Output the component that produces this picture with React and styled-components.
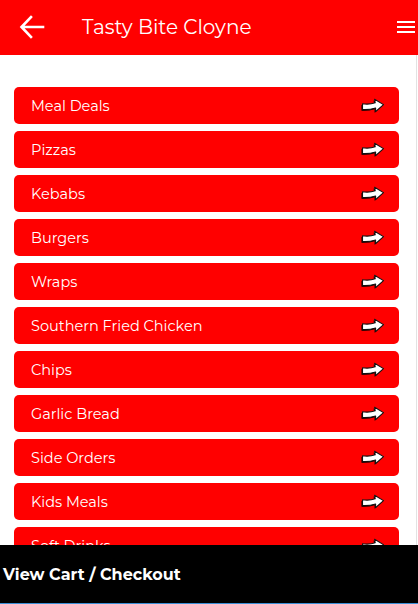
import styled, { createGlobalStyle } from "styled-components";

const GlobalStyle = createGlobalStyle`
  html, body {
    margin: 0;
    padding: 0;
    height: 100%;
    background: #fff;
    font-family: "Montserrat", "Inter", "Open Sans", sans-serif;
  }
  #root {
    height: 100%;
  }
`;

const categories = [
  "Meal Deals",
  "Pizzas",
  "Kebabs",
  "Burgers",
  "Wraps",
  "Southern Fried Chicken",
  "Chips",
  "Garlic Bread",
  "Side Orders",
  "Kids Meals",
  "Soft Drinks",
];

const BackArrow = () => (
  <svg width="26" height="24" viewBox="0 0 26 24" fill="none">
    <path
      d="M24 12H3M12 2L2.5 12L12 22"
      stroke="#fff"
      strokeWidth="2.6"
      strokeLinecap="square"
    />
  </svg>
);

// hand-drawn style white arrow with a dark outline and drop shadow
const arrowPath =
  "M1.5 5.8 Q8.5 6.8 14.2 4.8 L13.6 1.2 L22.5 6.6 L14.6 13.6 L14.6 10 Q8.5 12 1.5 11.6 Z";

const PointArrow = () => (
  <svg width="24" height="15" viewBox="0 0 24 15">
    <path d={arrowPath} fill="#000" transform="translate(-1 1.2)" />
    <path
      d={arrowPath}
      fill="#fff"
      stroke="#111"
      strokeWidth="1.1"
      strokeLinejoin="round"
    />
  </svg>
);

const App = () => {
  return (
    <>
      <GlobalStyle />
      <Page>
        <Header>
          <BackButton>
            <BackArrow />
          </BackButton>
          <Title>Tasty Bite Cloyne</Title>
          <MenuButton>
            <span />
            <span />
            <span />
          </MenuButton>
        </Header>
        <List>
          {categories.map((name) => (
            <CategoryRow key={name}>
              <span>{name}</span>
              <PointArrow />
            </CategoryRow>
          ))}
        </List>
        <Footer>View Cart / Checkout</Footer>
      </Page>
    </>
  );
};

const Page = styled.div`
  height: 100vh;
  display: flex;
  flex-direction: column;
  overflow: hidden;
`;

const Header = styled.header`
  flex: 0 0 55px;
  background: #ff0000;
  display: flex;
  align-items: center;
  color: #fff;
  padding-bottom: 2px;
  box-sizing: border-box;
`;

const BackButton = styled.div`
  width: 82px;
  display: flex;
  padding-left: 19px;
  box-sizing: border-box;
`;

const Title = styled.h1`
  flex: 1;
  margin: 0;
  font-size: 20px;
  font-weight: 400;
`;

const MenuButton = styled.div`
  display: flex;
  flex-direction: column;
  gap: 3px;
  padding-right: 3px;

  span {
    display: block;
    width: 18px;
    height: 2px;
    background: #fff;
  }
`;

const List = styled.main`
  flex: 1;
  overflow: hidden;
  padding: 32px 17px 0 14px;
  display: flex;
  flex-direction: column;
  gap: 7px;
  border-right: 1px solid #e2e2e2;
  margin-right: 1px;
`;

const CategoryRow = styled.div`
  flex: 0 0 37px;
  background: #ff0000;
  border-radius: 5px;
  display: flex;
  align-items: center;
  justify-content: space-between;
  padding: 0 14px 0 17px;
  color: #fff;
  font-size: 14.5px;
  font-weight: 400;
`;

const Footer = styled.footer`
  flex: 0 0 58px;
  background: #000;
  color: #fff;
  font-weight: 700;
  font-size: 16px;
  display: flex;
  align-items: center;
  padding-left: 3px;
  border-bottom: 1px solid #3b8fd6;
`;

export default App;
